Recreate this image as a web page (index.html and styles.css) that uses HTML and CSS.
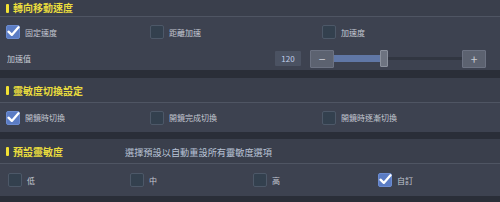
FILE: index.html
```html
<!DOCTYPE html>
<html lang="zh-Hant">
<head>
  <meta charset="UTF-8">
  <title>靈敏度設定</title>
  <link rel="stylesheet" href="styles.css">
</head>
<body>
  <div class="panel first">
    <div class="head"><span class="bar"></span><h2>轉向移動速度</h2></div>
    <div class="row cols3">
      <label class="opt"><span class="box on"><svg viewBox="0 0 14 14"><path d="M2.5 7.2 L5.8 10.4 L12.5 2.8"/></svg></span>固定速度</label>
      <label class="opt"><span class="box"></span>距離加速</label>
      <label class="opt"><span class="box"></span>加速度</label>
    </div>
    <div class="row slider-row">
      <span class="slider-label">加速值</span>
      <span class="value">120</span>
      <span class="step">−</span>
      <div class="track">
        <div class="fill" style="width: 47px"></div>
        <span class="thumb"></span>
      </div>
      <span class="step">+</span>
    </div>
  </div>

  <div class="panel">
    <div class="head"><span class="bar"></span><h2>靈敏度切換設定</h2></div>
    <div class="row cols3">
      <label class="opt"><span class="box on"><svg viewBox="0 0 14 14"><path d="M2.5 7.2 L5.8 10.4 L12.5 2.8"/></svg></span>開鏡時切換</label>
      <label class="opt"><span class="box"></span>開鏡完成切換</label>
      <label class="opt"><span class="box"></span>開鏡時逐漸切換</label>
    </div>
  </div>

  <div class="panel">
    <div class="head"><span class="bar"></span><h2>預設靈敏度</h2><span class="hint">選擇預設以自動重設所有靈敏度選項</span></div>
    <div class="row cols4">
      <label class="opt"><span class="box"></span>低</label>
      <label class="opt"><span class="box"></span>中</label>
      <label class="opt"><span class="box"></span>高</label>
      <label class="opt"><span class="box on"><svg viewBox="0 0 14 14"><path d="M2.5 7.2 L5.8 10.4 L12.5 2.8"/></svg></span>自訂</label>
    </div>
  </div>
</body>
</html>
```

FILE: styles.css
```css
body {
  margin: 0;
  width: 500px;
  height: 202px;
  overflow: hidden;
  background-color: #2a2e38;
  font-family: "Noto Sans CJK TC", "Noto Sans", sans-serif;
  color: #c6cad3;
}
.panel {
  background-color: #3d4250;
  margin-bottom: 7px;
}
.panel.first {
  margin-bottom: 8px;
}
.head {
  height: 23px;
  display: flex;
  align-items: center;
  padding: 1px 0 0 6px;
  border-bottom: 1px solid #4f5563;
  background-color: #3a3f4c;
}
.first .head {
  height: 16px;
  padding-top: 0;
}
.bar {
  width: 3px;
  height: 9px;
  border-radius: 1px;
  background-color: #f2e234;
  margin-right: 4px;
}
h2 {
  margin: 0;
  font-size: 10px;
  font-weight: bold;
  color: #e9dc3e;
  line-height: 1;
}
.hint {
  margin-left: 62px;
  font-size: 9.2px;
  color: #b9c3d6;
}
.row {
  height: 29px;
  display: grid;
  align-items: center;
  padding-left: 6px;
}
.first .row:nth-child(2) {
  height: 30px;
}
.first .slider-row {
  height: 23px;
}
.cols3 {
  grid-template-columns: 144px 172px 1fr;
}
.cols4 {
  height: 32px;
  padding-left: 8px;
  grid-template-columns: 122px 123px 125px 1fr;
}
.opt {
  display: flex;
  align-items: center;
  font-size: 8px;
  color: #c3c7d0;
}
.box {
  width: 12px;
  height: 12px;
  border: 1px solid #4d5868;
  border-radius: 2px;
  background-color: #33404e;
  margin-right: 5px;
  display: flex;
}
.box.on {
  background-color: #5b7cc4;
  border-color: #6b8bd0;
}
.box svg {
  width: 15px;
  height: 15px;
  margin: -2px -1px 0 -1px;
  fill: none;
  stroke: #ffffff;
  stroke-width: 2.3;
  stroke-linecap: round;
  stroke-linejoin: round;
}
.slider-row {
  display: flex;
  align-items: center;
}
.slider-label {
  font-size: 8px;
  margin-left: 1px;
  width: 268px;
}
.value {
  width: 26px;
  height: 15px;
  background-color: #4b5262;
  border-radius: 1px;
  font-size: 8px;
  color: #c0cdea;
  display: flex;
  align-items: center;
  justify-content: center;
  margin-right: 9px;
}
.step {
  width: 22px;
  height: 16px;
  border: 1px solid #6c7282;
  border-radius: 1px;
  background-color: #5c6270;
  color: #c9ccd3;
  font-size: 12px;
  display: flex;
  align-items: center;
  justify-content: center;
  line-height: 1;
}
.track {
  position: relative;
  width: 128px;
  height: 3px;
  background-color: #313641;
}
.fill {
  height: 7px;
  margin-top: -2px;
  background-color: #6077a6;
}
.thumb {
  position: absolute;
  left: 46px;
  top: -7px;
  width: 6px;
  height: 15px;
  border: 1px solid #8a909c;
  border-radius: 1px;
  background-color: #6d7380;
}
```
